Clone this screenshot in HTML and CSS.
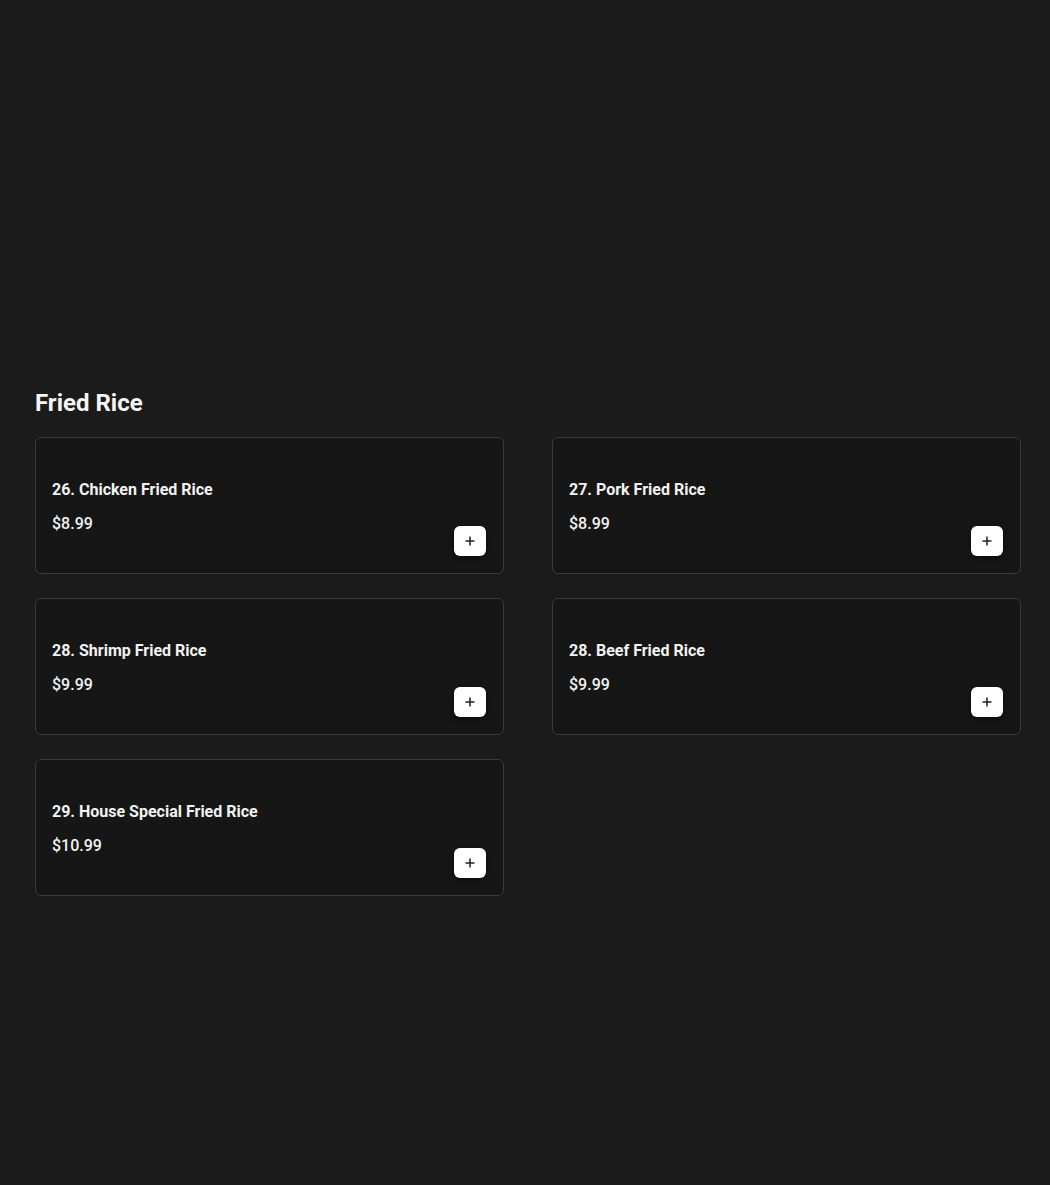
FILE: index.html
```html
<!DOCTYPE html>
<html lang="en">
<head>
<meta charset="utf-8">
<title>Fried Rice</title>
<link rel="stylesheet" href="styles.css">
</head>
<body>
<div class="hero"></div>
<section class="section">
  <h2 class="section-title">Fried Rice</h2>
  <div class="grid">
    <div class="card">
      <div class="info">
        <div class="name">26. Chicken Fried Rice</div>
        <div class="price">$8.99</div>
      </div>
      <button class="add" aria-label="Add"><svg width="10" height="10" viewBox="0 0 10 10"><path d="M5 0.5v9M0.5 5h9" stroke="#222" stroke-width="1.5"/></svg></button>
    </div>
    <div class="card">
      <div class="info">
        <div class="name">27. Pork Fried Rice</div>
        <div class="price">$8.99</div>
      </div>
      <button class="add" aria-label="Add"><svg width="10" height="10" viewBox="0 0 10 10"><path d="M5 0.5v9M0.5 5h9" stroke="#222" stroke-width="1.5"/></svg></button>
    </div>
    <div class="card">
      <div class="info">
        <div class="name">28. Shrimp Fried Rice</div>
        <div class="price">$9.99</div>
      </div>
      <button class="add" aria-label="Add"><svg width="10" height="10" viewBox="0 0 10 10"><path d="M5 0.5v9M0.5 5h9" stroke="#222" stroke-width="1.5"/></svg></button>
    </div>
    <div class="card">
      <div class="info">
        <div class="name">28. Beef Fried Rice</div>
        <div class="price">$9.99</div>
      </div>
      <button class="add" aria-label="Add"><svg width="10" height="10" viewBox="0 0 10 10"><path d="M5 0.5v9M0.5 5h9" stroke="#222" stroke-width="1.5"/></svg></button>
    </div>
    <div class="card">
      <div class="info">
        <div class="name">29. House Special Fried Rice</div>
        <div class="price">$10.99</div>
      </div>
      <button class="add" aria-label="Add"><svg width="10" height="10" viewBox="0 0 10 10"><path d="M5 0.5v9M0.5 5h9" stroke="#222" stroke-width="1.5"/></svg></button>
    </div>
  </div>
</section>
</body>
</html>
```
FILE: styles.css
```css
* { box-sizing: border-box; }
html, body { margin: 0; padding: 0; }
body {
  background: #1b1b1b;
  color: #f2f2f2;
  font-family: Roboto, "Liberation Sans", sans-serif;
  min-height: 1185px;
}
.hero { height: 380px; }
.section { padding: 0 29px 0 35px; }
.section-title {
  margin: 0 0 11px;
  font-size: 24px;
  line-height: 46px;
  font-weight: 700;
  color: #f5f5f5;
}
.grid {
  display: grid;
  grid-template-columns: 469px 469px;
  column-gap: 48px;
  row-gap: 24px;
}
.card {
  min-height: 137px;
  border: 1px solid #3b3b3b;
  border-radius: 6px;
  background: #161616;
  padding: 17px 17px 17px 16px;
  display: flex;
  align-items: center;
  justify-content: space-between;
}
.info { display: flex; flex-direction: column; gap: 10px; margin-top: 2px; }
.name { font-size: 16px; line-height: 24px; font-weight: 700; color: #f2f2f2; }
.price { font-size: 16px; line-height: 24px; font-weight: 500; color: #f2f2f2; }
.add {
  align-self: flex-end;
  width: 32px;
  height: 30px;
  border: none;
  border-radius: 6px;
  background: #fff;
  box-shadow: 0 2px 6px rgba(0,0,0,0.6);
  display: flex;
  align-items: center;
  justify-content: center;
  padding: 0;
  cursor: pointer;
}
```
